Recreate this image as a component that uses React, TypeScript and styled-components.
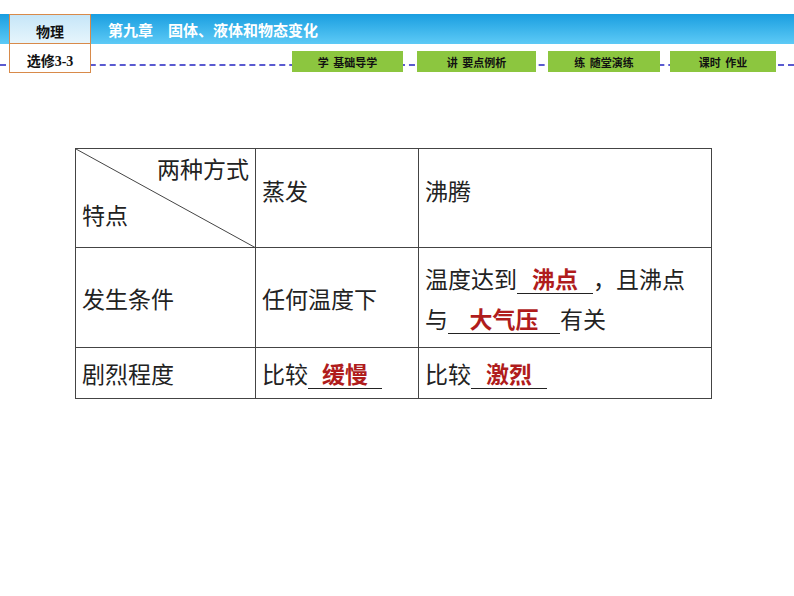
import React from "react";
import styled, { createGlobalStyle } from "styled-components";

const Global = createGlobalStyle`
  body { margin: 0; background: #fff; font-family: "Liberation Serif", "Noto Sans CJK SC", serif; }
`;

const Page = styled.div`
  width: 794px; height: 596px; position: relative; overflow: hidden; background: #fff;
`;
const Header = styled.div`
  position: relative; padding-top: 14px; height: 66px; box-sizing: border-box;
  border-bottom: 2px dashed #5a5ad0;
`;
const Band = styled.div`
  height: 30px; display: flex; align-items: center;
  background: linear-gradient(#1a9ee0, #5dcaf6);
  padding-left: 108px;
  color: #fff; font: bold 15px "Noto Sans CJK SC", sans-serif;
`;
const SubjectBox = styled.div`
  position: absolute; left: 9px; top: 14px; width: 82px; height: 59px;
  border: 1px solid #d88a4a; box-sizing: border-box; display: grid; grid-template-rows: 29px 1fr;
  background: #fff;
`;
const SubjectCell = styled.div<{ $top?: boolean }>`
  display: flex; align-items: flex-end; justify-content: center; padding-bottom: 2px;
  font: bold 14px "Liberation Serif", "Noto Sans CJK SC", serif; color: #111;
  background: ${p => (p.$top ? "linear-gradient(#c6e6f8, #e6f5fc)" : "#fff")};
  border-bottom: ${p => (p.$top ? "1px solid #d88a4a" : "none")};
`;
const Nav = styled.div`
  display: flex; margin-top: 7px; padding-left: 292px;
`;
const NavBtn = styled.div<{ $w: number; $gap: number }>`
  width: ${p => p.$w}px; margin-right: ${p => p.$gap}px; height: 21px;
  background: #8cc63f; display: flex; align-items: center; justify-content: center;
  font: bold 11px "Noto Sans CJK SC", sans-serif; color: #111; word-spacing: 2px;
`;
const Table = styled.div`
  position: absolute; left: 75px; top: 148px; width: 636px;
  display: grid; grid-template-columns: 180px 163px 293px; grid-template-rows: 99px 100px 51px;
  border-top: 1px solid #444; border-left: 1px solid #444;
  font: 23px "Noto Sans CJK SC", sans-serif; color: #222;
`;
const Cell = styled.div<{ $center?: boolean }>`
  border-right: 1px solid #444; border-bottom: 1px solid #444;
  padding: 0 6px; position: relative;
  display: flex; flex-direction: column; justify-content: ${p => (p.$center ? "center" : "flex-start")};
`;
const Line = styled.div<{ $mt?: number }>`
  margin-top: ${p => p.$mt ?? 0}px; line-height: 38px; white-space: nowrap;
`;
const Blank = styled.span<{ $w: number }>`
  display: inline-block; width: ${p => p.$w}px; border-bottom: 1.5px solid #222;
  text-align: center; line-height: 30px; color: #b01c1c; font-weight: bold;
`;
const Diag = styled.svg`
  position: absolute; left: 0; top: 0;
`;

export default function App() {
  return (
    <Page>
      <Global />
      <Header>
        <Band>第九章　固体、液体和物态变化</Band>
        <Nav>
          <NavBtn $w={111} $gap={14}>学 基础导学</NavBtn>
          <NavBtn $w={119} $gap={12}>讲 要点例析</NavBtn>
          <NavBtn $w={112} $gap={10}>练 随堂演练</NavBtn>
          <NavBtn $w={106} $gap={0}>课时 作业</NavBtn>
        </Nav>
        <SubjectBox>
          <SubjectCell $top>物理</SubjectCell>
          <SubjectCell>选修3-3</SubjectCell>
        </SubjectBox>
      </Header>
      <Table>
        <Cell>
          <Diag width="180" height="99"><line x1="0" y1="0" x2="180" y2="99" stroke="#444" strokeWidth="1" /></Diag>
          <Line style={{ textAlign: "right" }}>两种方式</Line>
          <Line $mt={8}>特点</Line>
        </Cell>
        <Cell><Line $mt={22}>蒸发</Line></Cell>
        <Cell><Line $mt={22}>沸腾</Line></Cell>
        <Cell $center><Line>发生条件</Line></Cell>
        <Cell $center><Line>任何温度下</Line></Cell>
        <Cell $center>
          <Line>温度达到<Blank $w={76}>沸点</Blank>，且沸点</Line>
          <Line $mt={2}>与<Blank $w={112}>大气压</Blank>有关</Line>
        </Cell>
        <Cell $center><Line>剧烈程度</Line></Cell>
        <Cell $center><Line>比较<Blank $w={74}>缓慢</Blank></Line></Cell>
        <Cell $center><Line>比较<Blank $w={76}>激烈</Blank></Line></Cell>
      </Table>
    </Page>
  );
}
